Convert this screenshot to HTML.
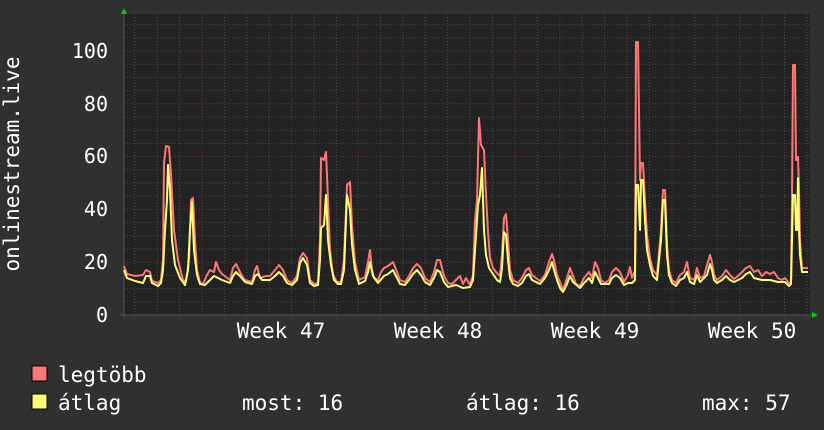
<!DOCTYPE html>
<html><head><meta charset="utf-8"><style>
html,body{margin:0;padding:0;background:#303030;}
svg{display:block;}
text{font-family:"DejaVu Sans Mono","Liberation Mono",monospace;fill:#fff;}
</style></head><body>
<svg width="824" height="430" viewBox="0 0 824 430" xmlns="http://www.w3.org/2000/svg">
<rect width="824" height="430" fill="#303030"/>
<rect x="124" y="14" width="686" height="301" fill="#222"/>
<g stroke="#4a4a4a" stroke-width="1" stroke-dasharray="1,2">
<!-- minor horizontal every 5 units (13.2px) -->
<path d="M124 301.8H810M124 288.6H810M124 275.4H810M124 249H810M124 235.8H810M124 222.6H810M124 196.2H810M124 183H810M124 169.8H810M124 143.4H810M124 130.2H810M124 117H810M124 90.6H810M124 77.4H810M124 64.2H810M124 37.8H810M124 24.6H810"/>
<path d="M134.8 14V318M157.2 14V318M179.6 14V318M224.4 14V318M246.8 14V318M269.2 14V318M291.6 14V318M314 14V318M336.4 14V318M380.4 14V318M402.8 14V318M425.2 14V318M447.6 14V318M470 14V318M492.4 14V318M537.4 14V318M559.8 14V318M582.2 14V318M604.6 14V318M627 14V318M649.4 14V318M695 14V318M717.4 14V318M739.8 14V318M762.2 14V318M784.6 14V318M807 14V318"/>
</g>
<g stroke="#7a3535" stroke-width="1" stroke-dasharray="1,2">
<path d="M124 262.2H810M124 209.4H810M124 156.6H810M124 103.8H810M124 51H810"/>
<path d="M202 14V318M358 14V318M515 14V318M672 14V318"/>
</g>
<path d="M124 10V318M120 315H812" stroke="#555" stroke-width="1"/>
<polygon points="121,14 127,14 124,8" fill="#0c0"/>
<polygon points="812,312 812,318 818,315" fill="#0c0"/>
<polyline fill="none" stroke="#ff7777" stroke-width="2" stroke-linejoin="round" points="124,266 127,274 135,276 143,275 146,270 150,272 152,281 158,283 161,280 163,260 164,163 166,146 169,147 171,175 174,230 178,260 183,280 186,282 189,260 191,200 193,198 195,240 197,270 200,283 203,284 207,275 210,270 214,272 216,262 219,270 222,274 226,277 230,280 233,268 236,264 239,270 242,276 245,280 252,282 255,270 257,266 260,278 266,276 270,276 275,270 279,265 283,270 287,280 292,283 297,276 300,258 303,253 307,258 310,280 314,284 318,283 320,240 321,158 324,160 326,152 328,200 330,250 333,275 337,282 341,282 344,260 347,185 350,182 352,225 355,262 359,280 365,277 368,262 370,250 372,270 374,278 378,280 381,272 384,268 388,266 393,262 397,272 400,280 405,282 409,276 413,268 417,264 421,268 425,278 430,282 434,272 437,260 440,260 444,276 448,283 452,284 456,280 460,276 463,284 466,278 470,285 473,275 475,220 477,200 479,118 481,145 484,150 486,195 488,232 490,258 493,268 496,272 500,276 502,255 504,218 506,214 508,240 510,270 513,280 518,283 522,278 526,270 529,268 532,275 536,278 540,281 545,275 549,262 552,254 554,260 557,275 560,282 563,290 567,278 570,268 573,276 576,284 580,286 584,278 589,272 592,278 595,262 598,268 601,280 605,283 609,280 612,272 616,268 620,272 624,282 628,275 630,267 632,278 635,270 636,42 638,42 640,180 641,163 643,163 645,200 647,235 650,258 653,270 657,275 661,230 663,190 665,190 667,245 669,270 672,280 676,283 680,275 684,272 687,262 690,278 694,280 697,268 700,278 704,276 707,265 710,255 712,262 714,275 717,280 722,276 726,270 730,275 734,279 738,276 742,272 746,268 750,266 754,272 758,270 762,276 766,272 770,274 774,272 778,278 782,280 785,278 789,283 791,282 792,200 793,65 795,65 796,160 797,160 798,157 799,190 800,240 802,268 805,268 808,268"/>
<polyline fill="none" stroke="#ffff77" stroke-width="2" stroke-linejoin="round" points="124,270 127,278 135,281 143,283 146,276 150,276 152,283 158,286 161,283 163,270 165,230 167,200 168,165 170,190 172,240 175,265 180,278 185,285 188,270 190,230 192,202 194,250 197,275 200,284 205,285 210,280 214,276 218,278 222,280 230,283 233,276 236,272 240,276 245,282 252,284 255,276 258,274 262,280 270,280 275,276 279,272 283,276 287,283 292,285 297,280 300,263 303,258 307,265 310,283 314,286 318,285 320,260 321,228 324,225 326,195 328,240 331,265 334,280 338,284 341,284 344,270 347,195 350,210 352,245 355,270 359,284 365,281 368,272 370,262 373,276 378,283 384,276 388,274 393,270 397,278 400,284 405,285 409,280 413,274 417,270 421,275 425,282 430,285 434,278 437,270 440,272 444,282 448,287 456,285 463,288 470,287 473,280 475,250 478,205 480,195 482,168 484,230 486,255 489,268 493,274 497,280 500,282 502,268 504,232 506,235 508,260 510,278 513,284 518,286 522,283 526,276 529,274 532,280 540,284 545,278 549,270 552,262 554,270 557,280 560,288 563,292 567,284 570,276 573,282 580,288 584,283 589,278 592,283 595,272 598,278 601,284 609,284 612,278 616,275 620,278 624,285 628,283 632,283 635,280 636,185 638,185 640,230 641,180 643,180 645,220 647,250 650,265 653,276 657,280 661,240 663,200 665,200 667,255 669,275 672,283 676,286 680,280 684,278 687,272 690,282 694,284 697,275 700,282 707,275 710,264 712,270 714,280 717,283 722,280 726,276 730,280 734,282 742,278 746,274 750,272 754,278 762,280 770,280 778,282 785,282 789,286 791,284 792,240 793,195 795,195 796,230 797,230 798,178 799,230 800,255 802,272 808,272"/>
<g font-size="20" text-anchor="end">
<text x="108" y="58">100</text>
<text x="108" y="111">80</text>
<text x="108" y="163">60</text>
<text x="108" y="216">40</text>
<text x="108" y="269">20</text>
<text x="108" y="322">0</text>
</g>
<text font-size="21" text-anchor="middle" transform="translate(19,164) rotate(-90)">onlinestream.live</text>
<g font-size="21" text-anchor="middle">
<text x="281" y="338">Week 47</text>
<text x="438" y="338">Week 48</text>
<text x="595" y="338">Week 49</text>
<text x="752" y="338">Week 50</text>
</g>
<rect x="32" y="366" width="15" height="15" fill="#ff7777" stroke="#000" stroke-width="1"/>
<rect x="32" y="394" width="15" height="15" fill="#ffff77" stroke="#000" stroke-width="1"/>
<g font-size="21">
<text x="58" y="382">legtöbb</text>
<text x="58" y="410">átlag</text>
<text x="242" y="410">most: 16</text>
<text x="466" y="410">átlag: 16</text>
<text x="702" y="410">max: 57</text>
</g>
</svg>
</body></html>
